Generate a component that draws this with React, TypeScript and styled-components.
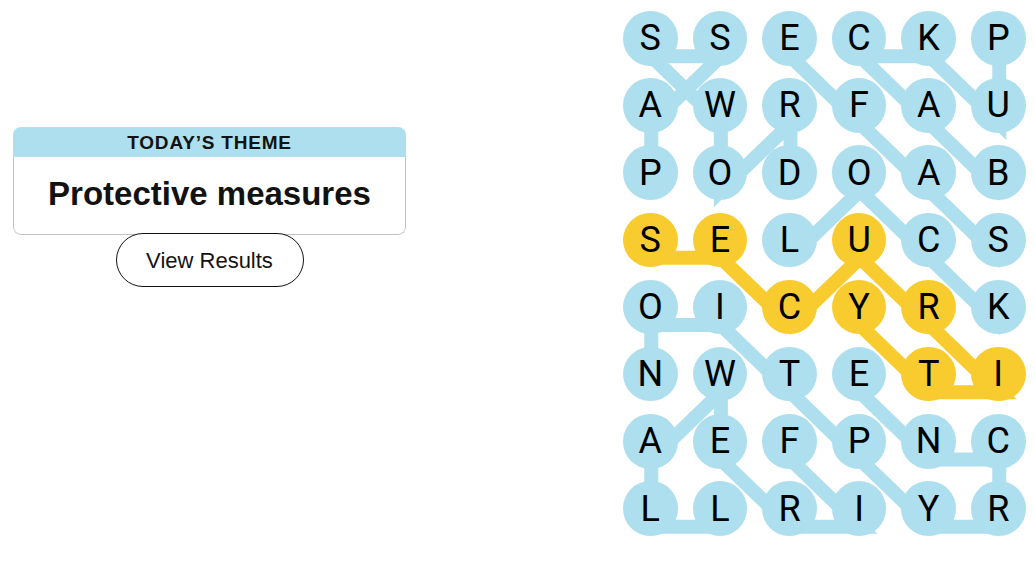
import React from 'react';
import styled, { createGlobalStyle } from 'styled-components';

const BLUE = '#aedfee';
const YELLOW = '#f8cc2e';

const CELL = 54.5;
const COL_STEP = 69.6;
const ROW_STEP = 67.2;

const GlobalStyle = createGlobalStyle`
    body {
        margin: 0;
        background: #ffffff;
        font-family: "Liberation Sans", Arial, sans-serif;
        color: #121212;
    }
`;

const Page = styled.div`
    display: flex;
    align-items: flex-start;
    width: 1035px;
    height: 582px;
    box-sizing: border-box;
    padding: 11px 9.5px 0 13px;
`;

const Sidebar = styled.div`
    display: flex;
    flex-direction: column;
    align-items: center;
    width: 393px;
    margin-top: 116px;
`;

const ThemeCard = styled.div`
    width: 100%;
    border-radius: 8px;
    overflow: hidden;
`;

const ThemeHeader = styled.div`
    height: 30px;
    padding-top: 2px;
    box-sizing: border-box;
    background: ${BLUE};
    text-align: center;
    font-size: 19px;
    font-weight: 700;
    line-height: 28px;
    letter-spacing: 0.8px;
    color: #121212;
`;

const ThemeBody = styled.div`
    display: flex;
    align-items: center;
    justify-content: center;
    height: 78px;
    padding-bottom: 4px;
    box-sizing: border-box;
    border: 1px solid #c2c2c2;
    border-top: none;
    border-radius: 0 0 8px 8px;
    font-size: 33px;
    font-weight: 700;
    color: #121212;
`;

const ResultsButton = styled.button`
    width: 188px;
    height: 54px;
    margin-top: -2px;
    padding-top: 3px;
    border: 1px solid #121212;
    border-radius: 27px;
    background: #ffffff;
    font-family: "Liberation Sans", Arial, sans-serif;
    font-size: 22px;
    color: #121212;
    cursor: pointer;
`;

const Board = styled.div`
    position: relative;
    margin-left: auto;
    display: grid;
    grid-template-columns: repeat(6, ${CELL}px);
    grid-template-rows: repeat(8, ${CELL}px);
    column-gap: ${COL_STEP - CELL}px;
    row-gap: ${ROW_STEP - CELL}px;
`;

const Trails = styled.svg`
    position: absolute;
    inset: 0;
    width: 100%;
    height: 100%;
    overflow: visible;
    z-index: 0;
`;

const Tile = styled.div<{ $tone: 'found' | 'span' }>`
    position: relative;
    z-index: 1;
    display: flex;
    align-items: center;
    justify-content: center;
    width: ${CELL}px;
    height: ${CELL}px;
    border-radius: 50%;
    background: ${p => (p.$tone === 'span' ? YELLOW : BLUE)};
    font-family: Roboto, "Liberation Sans", sans-serif;
    font-size: 36px;
    color: #000000;
`;

const letters = [
    'SSECKP',
    'AWRFAU',
    'PODOAB',
    'SELUCS',
    'OICYRK',
    'NWTETI',
    'AEFPNC',
    'LLRIYR',
];

type Cell = [number, number];

// each found word as a path of [row, col]
const words: Cell[][] = [
    [[2, 0], [1, 0], [0, 1], [0, 0], [1, 1], [2, 1], [1, 2], [2, 2]],
    [[2, 5], [1, 4], [0, 3], [0, 4], [1, 5], [0, 5]],
    [[3, 5], [2, 4], [1, 3], [0, 2]],
    [[3, 2], [2, 3], [3, 4], [4, 5]],
    [[6, 2], [7, 3], [7, 2], [6, 1], [5, 1], [6, 0], [7, 0], [7, 1]],
    [[5, 3], [6, 4], [6, 5], [7, 5], [7, 4], [6, 3], [5, 2], [4, 1], [4, 0], [5, 0]],
];

const spangram: Cell[] = [[3, 0], [3, 1], [4, 2], [3, 3], [4, 4], [5, 5], [5, 4], [4, 3]];

const isSpan = (r: number, c: number) => spangram.some(([sr, sc]) => sr === r && sc === c);

const point = ([r, c]: Cell) => `${CELL / 2 + c * COL_STEP + 1},${CELL / 2 + r * ROW_STEP + 18}`;

function Trail({ path, color }: { path: Cell[]; color: string }) {
    return (
        <polyline
            points={path.map(point).join(' ')}
            fill="none"
            stroke={color}
            strokeWidth={14}
            strokeLinecap="square"
            strokeLinejoin="miter"
        />
    );
}

export default function App() {
    return (
        <>
            <GlobalStyle />
            <Page>
                <Sidebar>
                    <ThemeCard>
                        <ThemeHeader>TODAY’S THEME</ThemeHeader>
                        <ThemeBody>Protective measures</ThemeBody>
                    </ThemeCard>
                    <ResultsButton>View Results</ResultsButton>
                </Sidebar>
                <Board>
                    <Trails>
                        {words.map((w, i) => (
                            <Trail key={i} path={w} color={BLUE} />
                        ))}
                        <Trail path={spangram} color={YELLOW} />
                    </Trails>
                    {letters.map((row, r) =>
                        row.split('').map((ch, c) => (
                            <Tile key={`${r}-${c}`} $tone={isSpan(r, c) ? 'span' : 'found'}>
                                {ch}
                            </Tile>
                        ))
                    )}
                </Board>
            </Page>
        </>
    );
}
